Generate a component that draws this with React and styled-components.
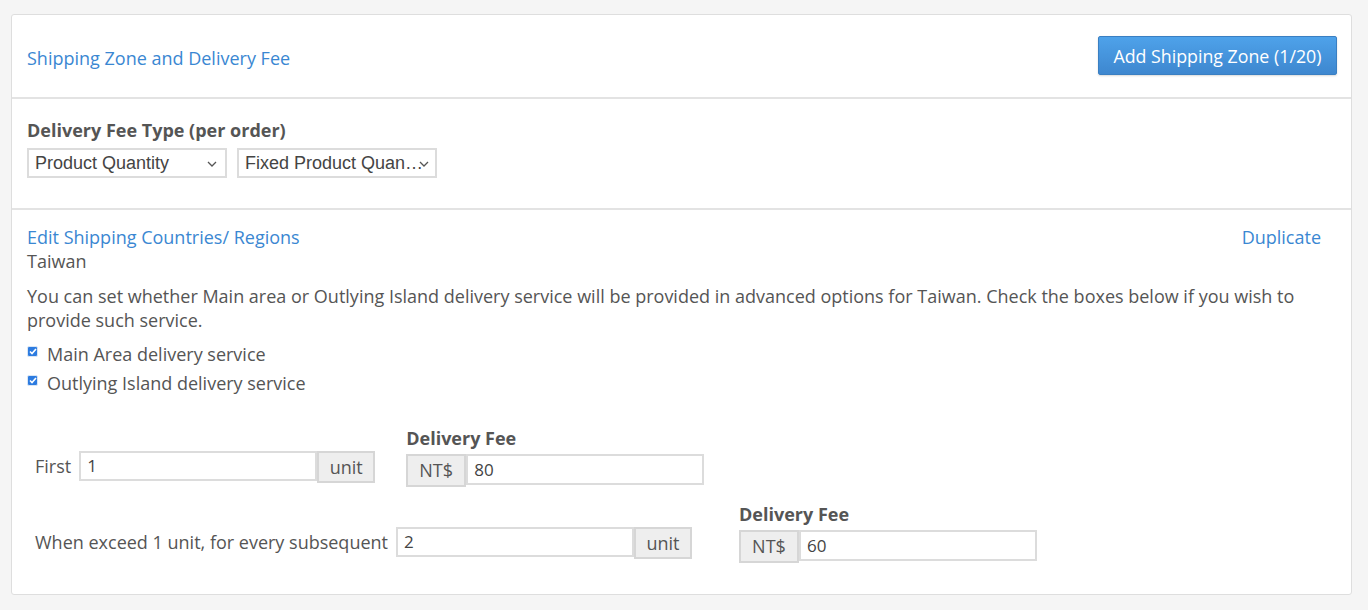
import React from "react";
import styled, { createGlobalStyle } from "styled-components";

const GlobalStyle = createGlobalStyle`
    body {
        margin: 0;
        background: #f5f5f5;
        font-family: "Open Sans", "Liberation Sans", sans-serif;
        color: #555;
    }
`;

const Page = styled.div`
    padding: 14px 16px 14px 11px;
`;

const Card = styled.div`
    background: #fff;
    border: 1px solid #dedede;
    border-radius: 3px;
`;

const Header = styled.div`
    display: flex;
    justify-content: space-between;
    align-items: center;
    padding: 21px 14px 22px 15px;
    border-bottom: 2px solid #e3e3e3;
`;

const BlueLink = styled.a`
    color: #3a87d2;
    font-size: 18px;
    line-height: 24px;
    text-decoration: none;
    cursor: pointer;
`;

const HeaderTitle = styled(BlueLink)`
    margin-top: 5px;
`;

const AddButton = styled.button`
    height: 39px;
    padding: 0 14.5px;
    font-family: "Open Sans", sans-serif;
    font-size: 17.8px;
    color: #fff;
    background: linear-gradient(#4ea2ea, #3e87cf);
    border: 1px solid #3a7fc2;
    border-radius: 2px;
    box-shadow: 0 1px 2px rgba(0, 0, 0, 0.15);
`;

const Section = styled.div`
    padding: ${(p) => p.$pad};
    border-bottom: ${(p) => (p.$last ? "none" : "2px solid #e3e3e3")};
`;

const BoldLabel = styled.div`
    font-weight: 700;
    font-size: 18px;
    line-height: 22px;
    color: #555;
`;

const SelectRow = styled.div`
    display: flex;
    gap: 10px;
    margin-top: 7px;
`;

const Select = styled.div`
    position: relative;
    box-sizing: border-box;
    width: 200px;
    height: 30px;
    border: 2px solid #dcdcdc;
    padding: 0 28px 0 6px;
    font-family: "Liberation Sans", Arial, sans-serif;
    font-size: 18px;
    line-height: 26px;
    color: #444;
    white-space: nowrap;
    overflow: hidden;
    text-overflow: ${(p) => (p.$clip ? "ellipsis" : "clip")};
    padding-right: ${(p) => (p.$clip ? "9px" : "28px")};
`;

const Chevron = styled.svg`
    position: absolute;
    right: ${(p) => p.$right}px;
    top: 11px;
`;

const TopRow = styled.div`
    display: flex;
    justify-content: space-between;
    padding-right: 30px;
`;

const Text = styled.div`
    font-size: 18px;
    line-height: 24px;
    color: #555;
`;

const Paragraph = styled(Text)`
    margin-top: 11px;
    padding-right: 30px;
`;

const CheckList = styled.div`
    margin-top: 7px;
    display: flex;
    flex-direction: column;
`;

const CheckRow = styled.label`
    display: flex;
    align-items: center;
    height: 29px;
    font-size: 18px;
    color: #555;
`;

const CheckBox = styled.span`
    box-sizing: border-box;
    width: 11px;
    height: 11px;
    margin: 0 9px 4px 0;
    border-radius: 2px;
    background: #2c7be0;
    border: 1px solid #d9e6f5;
    display: flex;
    align-items: center;
    justify-content: center;
`;

const FeeRow = styled.div`
    display: flex;
    align-items: flex-end;
    margin-top: ${(p) => p.$top}px;
    padding-left: 8px;
`;

const QtyPart = styled.div`
    display: flex;
    align-items: center;
    margin-bottom: 4px;
`;

const RowText = styled.span`
    font-size: 18px;
    color: #555;
    margin-right: 8px;
    margin-bottom: 2px;
`;

const Group = styled.div`
    display: flex;
`;

const Input = styled.div`
    box-sizing: border-box;
    width: ${(p) => p.$w}px;
    height: ${(p) => p.$h}px;
    border: 2px solid #dcdcdc;
    padding: 0 6px;
    font-size: 17px;
    line-height: ${(p) => p.$h - 4}px;
    color: #444;
`;

const Addon = styled.div`
    box-sizing: border-box;
    width: ${(p) => p.$w}px;
    height: ${(p) => p.$h}px;
    background: #eee;
    border: 2px solid #d6d6d6;
    font-size: 18px;
    line-height: ${(p) => p.$h - 4}px;
    text-align: center;
    color: #555;
`;

const FeeCol = styled.div`
    display: flex;
    flex-direction: column;
    margin-left: ${(p) => p.$left}px;
`;

const FeeLabel = styled(BoldLabel)`
    margin-bottom: 5px;
`;

const ChevronIcon = ({ right }) => (
    <Chevron $right={right} width="10" height="6" viewBox="0 0 10 6">
        <path d="M1 1l4 4 4-4" fill="none" stroke="#555" strokeWidth="1.3" />
    </Chevron>
);

const FeeGroup = ({ left, value }) => (
    <FeeCol $left={left}>
        <FeeLabel>Delivery Fee</FeeLabel>
        <Group>
            <Addon $w={60} $h={33}>NT$</Addon>
            <Input $w={238} $h={31}>{value}</Input>
        </Group>
    </FeeCol>
);

const QtyGroup = ({ label, value }) => (
    <QtyPart>
        <RowText>{label}</RowText>
        <Group>
            <Input $w={238} $h={30}>{value}</Input>
            <Addon $w={58} $h={32}>unit</Addon>
        </Group>
    </QtyPart>
);

export default function App() {
    return (
        <Page>
            <GlobalStyle />
            <Card>
                <Header>
                    <HeaderTitle>Shipping Zone and Delivery Fee</HeaderTitle>
                    <AddButton>Add Shipping Zone (1/20)</AddButton>
                </Header>

                <Section $pad="20px 16px 30px 15px">
                    <BoldLabel>Delivery Fee Type (per order)</BoldLabel>
                    <SelectRow>
                        <Select>
                            Product Quantity
                            <ChevronIcon right={8} />
                        </Select>
                        <Select $clip>
                            Fixed Product Quantity
                            <ChevronIcon right={6} />
                        </Select>
                    </SelectRow>
                </Section>

                <Section $pad="15px 0 31px 15px" $last>
                    <TopRow>
                        <BlueLink>Edit Shipping Countries/ Regions</BlueLink>
                        <BlueLink>Duplicate</BlueLink>
                    </TopRow>
                    <Text>Taiwan</Text>
                    <Paragraph>
                        You can set whether Main area or Outlying Island delivery service will be
                        provided in advanced options for Taiwan. Check the boxes below if you wish to
                        provide such service.
                    </Paragraph>
                    <CheckList>
                        {["Main Area delivery service", "Outlying Island delivery service"].map((t) => (
                            <CheckRow key={t}>
                                <CheckBox>
                                    <svg width="8" height="7" viewBox="0 0 8 7">
                                        <path d="M1 3.5l2 2L7 1" fill="none" stroke="#fff" strokeWidth="1.6" />
                                    </svg>
                                </CheckBox>
                                {t}
                            </CheckRow>
                        ))}
                    </CheckList>

                    <FeeRow $top={30}>
                        <QtyGroup label="First" value="1" />
                        <FeeGroup left={31} value="80" />
                    </FeeRow>

                    <FeeRow $top={16}>
                        <QtyGroup label="When exceed 1 unit, for every subsequent" value="2" />
                        <FeeGroup left={47} value="60" />
                    </FeeRow>
                </Section>
            </Card>
        </Page>
    );
}
